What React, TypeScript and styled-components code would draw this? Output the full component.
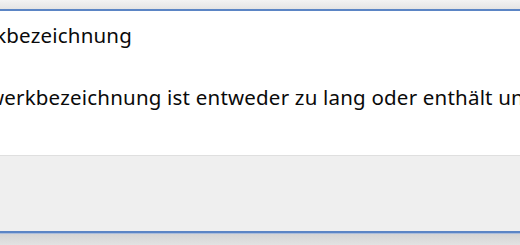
import React from 'react';
import styled, {createGlobalStyle} from 'styled-components';

const GlobalStyle = createGlobalStyle`
  html, body {
    margin: 0;
    padding: 0;
    overflow: hidden;
  }
  body {
    width: 520px;
    height: 245px;
    background: linear-gradient(#f3f3f3, #e4e4e4 9px, #d3d3d3 233px, #e2e2e2 245px);
    font-family: "Noto Sans", "Open Sans", sans-serif;
  }
`

const Backdrop = styled.div`
  height: 245px;
  padding-top: 9px;
  box-sizing: border-box;
`

const Dialog = styled.div`
  display: flex;
  flex-direction: column;
  margin: 0 -60px;
  border-top: 2px solid #5b85c5;
  border-bottom: 2px solid #5b85c5;
  box-shadow: 0 1px 0 #a9bcdc;
`

const Content = styled.div`
  background: #ffffff;
  padding: 10px 0 0;
  height: 145px;
  box-sizing: border-box;
  border-bottom: 1px solid #dfdfdf;
`

const Line = styled.p<{ $shift: number }>`
  margin: 0 0 0 ${props => props.$shift}px;
  font-size: 20.5px;
  letter-spacing: 0.2px;
  line-height: 28px;
  color: #0a0a0a;
  white-space: nowrap;

  & + & {
    margin-top: 34px;
  }
`

const Footer = styled.div`
  background: #efefef;
  height: 75px;
`

function App() {
  return (
    <>
      <GlobalStyle/>
      <Backdrop>
        <Dialog>
          <Content>
            <Line $shift={-129}>Ungültige Netzwerkbezeichnung</Line>
            <Line $shift={-35}>Die Netzwerkbezeichnung ist entweder zu lang oder enthält ungültige Zeichen.</Line>
          </Content>
          <Footer/>
        </Dialog>
      </Backdrop>
    </>
  );
}

export default App;
